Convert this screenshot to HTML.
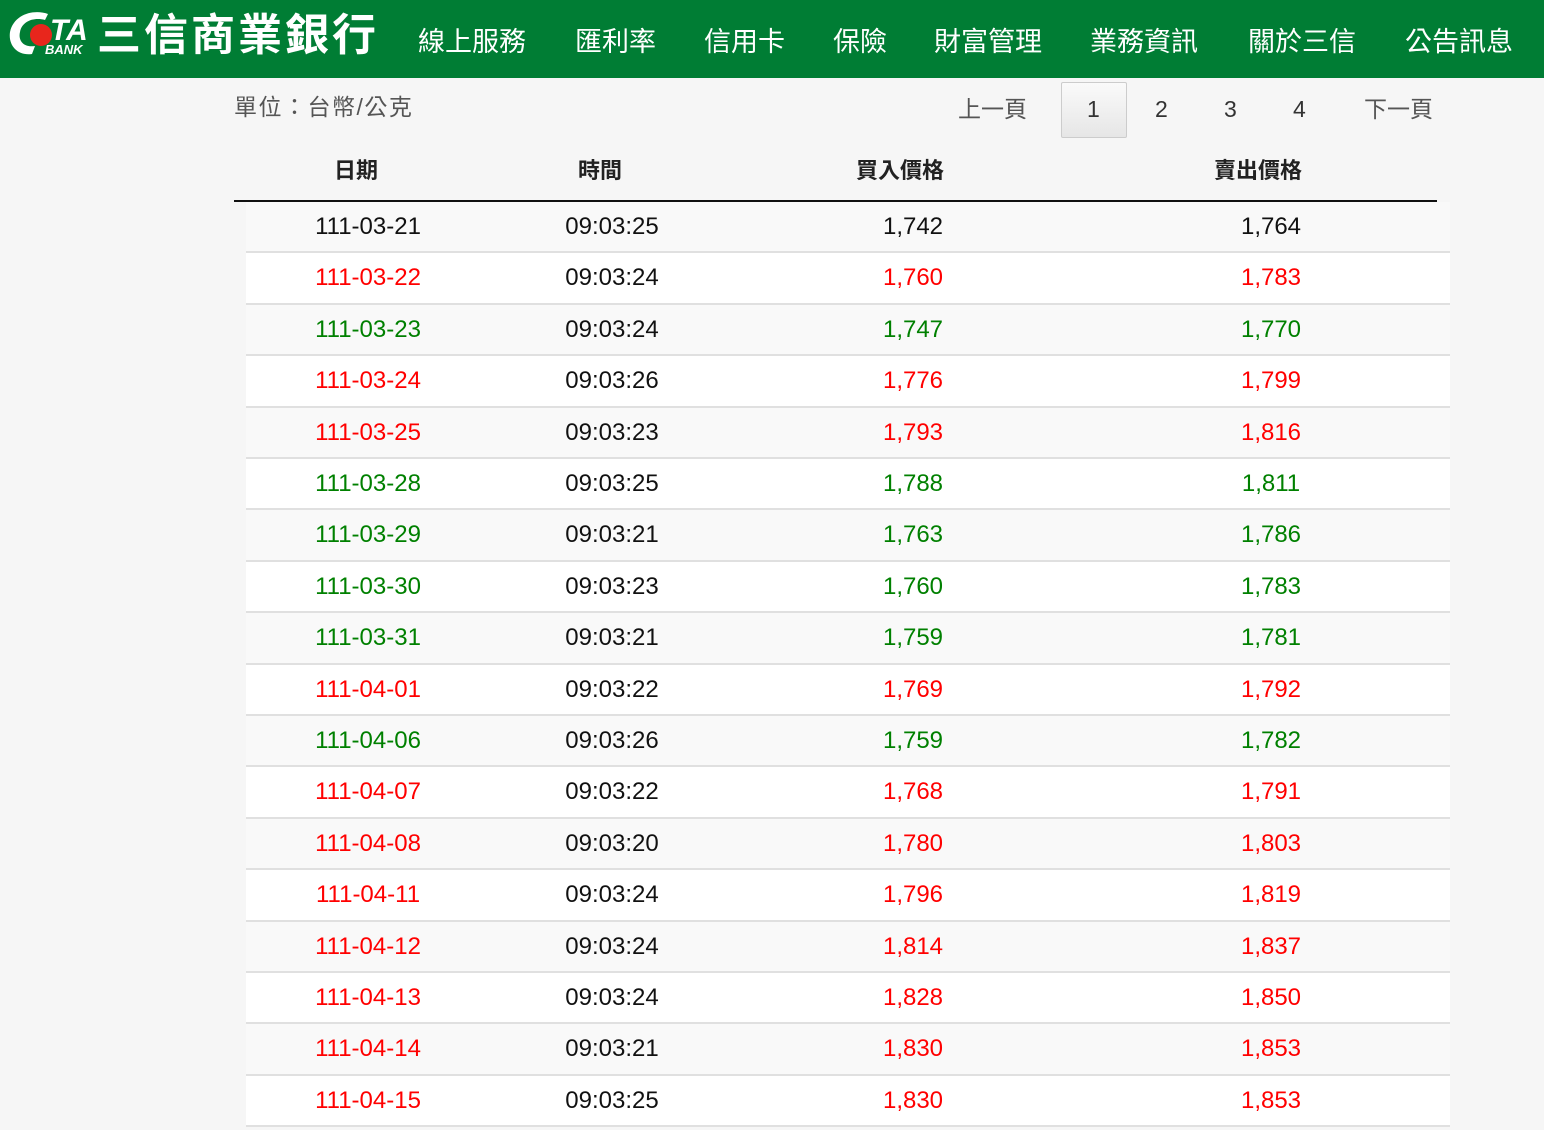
<!DOCTYPE html>
<html><head><meta charset="utf-8"><style>
*{margin:0;padding:0;box-sizing:border-box}
body{width:1544px;height:1130px;overflow:hidden;background:#f6f6f6;font-family:"Liberation Sans","Noto Sans CJK TC",sans-serif;position:relative}
.hd{position:absolute;left:0;top:0;width:1544px;height:78px;background:#007d34}
.nav{position:absolute;top:22px;color:#fff;font-size:27px;line-height:40px;white-space:nowrap}
.brand{position:absolute;left:97px;top:10px;color:#fff;font-size:44px;font-weight:bold;line-height:52px;letter-spacing:3px}
.unit{position:absolute;left:234px;top:92px;font-size:23px;color:#555;line-height:30px;letter-spacing:1.5px}
.pg{position:absolute;top:94px;font-size:23px;color:#555;line-height:30px}
.pbox{position:absolute;left:1061px;top:82px;width:66px;height:56px;border:1px solid #ccc;background:linear-gradient(#fafafa,#e6e6e6);border-radius:2px}
.th{position:absolute;top:156px;font-size:22px;font-weight:bold;color:#222;transform:translateX(-50%);line-height:30px}
.hl{position:absolute;left:234px;top:200px;width:1203px;height:2px;background:#111}
.row{position:absolute;left:246px;width:1204px;height:51.4px;border-bottom:2px solid #e0e0e0}
.row span{position:absolute;top:10px;font-size:24px;line-height:30px;transform:translateX(-50%)}
.r{color:#f00}.g{color:#008000}.k{color:#111}
</style></head><body>
<div class="hd">
<svg style="position:absolute;left:8px;top:10px" width="86" height="46" viewBox="0 0 86 46">
<path d="M40 4 C26 -1 6 4 2 22 C0 36 10 46 24 44 L27 36 C15 38 10 30 12 22 C14 11 26 7 37 10 Z" fill="#fff"/>
<circle cx="33" cy="25" r="11" fill="#e8261c"/>
<text x="42" y="30" font-family="Liberation Sans" font-style="italic" font-weight="bold" font-size="30" fill="#fff">TA</text>
<text x="37" y="44" font-family="Liberation Sans" font-style="italic" font-weight="bold" font-size="13" fill="#fff">BANK</text>
</svg>
<div class="brand">三信商業銀行</div>
<div class="nav" style="left:418px">線上服務</div>
<div class="nav" style="left:575px">匯利率</div>
<div class="nav" style="left:704px">信用卡</div>
<div class="nav" style="left:833px">保險</div>
<div class="nav" style="left:934px">財富管理</div>
<div class="nav" style="left:1090px">業務資訊</div>
<div class="nav" style="left:1248px">關於三信</div>
<div class="nav" style="left:1405px">公告訊息</div>
</div>
<div class="unit">單位：台幣/公克</div>
<div class="pg" style="left:958px">上一頁</div>
<div class="pbox"></div>
<div class="pg" style="left:1087px;color:#333">1</div>
<div class="pg" style="left:1155px;color:#333">2</div>
<div class="pg" style="left:1224px;color:#333">3</div>
<div class="pg" style="left:1293px;color:#333">4</div>
<div class="pg" style="left:1364px">下一頁</div>
<div class="th" style="left:356px">日期</div>
<div class="th" style="left:600px">時間</div>
<div class="th" style="left:900px">買入價格</div>
<div class="th" style="left:1258px">賣出價格</div>
<div class="hl"></div>
<div class="row" style="top:202px;background:#f9f9f9"><span class="k" style="left:122px">111-03-21</span><span class="k" style="left:366px">09:03:25</span><span class="k" style="left:667px">1,742</span><span class="k" style="left:1025px">1,764</span></div>
<div class="row" style="top:253.4px;background:#fff"><span class="r" style="left:122px">111-03-22</span><span class="k" style="left:366px">09:03:24</span><span class="r" style="left:667px">1,760</span><span class="r" style="left:1025px">1,783</span></div>
<div class="row" style="top:304.8px;background:#f9f9f9"><span class="g" style="left:122px">111-03-23</span><span class="k" style="left:366px">09:03:24</span><span class="g" style="left:667px">1,747</span><span class="g" style="left:1025px">1,770</span></div>
<div class="row" style="top:356.2px;background:#fff"><span class="r" style="left:122px">111-03-24</span><span class="k" style="left:366px">09:03:26</span><span class="r" style="left:667px">1,776</span><span class="r" style="left:1025px">1,799</span></div>
<div class="row" style="top:407.6px;background:#f9f9f9"><span class="r" style="left:122px">111-03-25</span><span class="k" style="left:366px">09:03:23</span><span class="r" style="left:667px">1,793</span><span class="r" style="left:1025px">1,816</span></div>
<div class="row" style="top:459px;background:#fff"><span class="g" style="left:122px">111-03-28</span><span class="k" style="left:366px">09:03:25</span><span class="g" style="left:667px">1,788</span><span class="g" style="left:1025px">1,811</span></div>
<div class="row" style="top:510.4px;background:#f9f9f9"><span class="g" style="left:122px">111-03-29</span><span class="k" style="left:366px">09:03:21</span><span class="g" style="left:667px">1,763</span><span class="g" style="left:1025px">1,786</span></div>
<div class="row" style="top:561.8px;background:#fff"><span class="g" style="left:122px">111-03-30</span><span class="k" style="left:366px">09:03:23</span><span class="g" style="left:667px">1,760</span><span class="g" style="left:1025px">1,783</span></div>
<div class="row" style="top:613.2px;background:#f9f9f9"><span class="g" style="left:122px">111-03-31</span><span class="k" style="left:366px">09:03:21</span><span class="g" style="left:667px">1,759</span><span class="g" style="left:1025px">1,781</span></div>
<div class="row" style="top:664.6px;background:#fff"><span class="r" style="left:122px">111-04-01</span><span class="k" style="left:366px">09:03:22</span><span class="r" style="left:667px">1,769</span><span class="r" style="left:1025px">1,792</span></div>
<div class="row" style="top:716px;background:#f9f9f9"><span class="g" style="left:122px">111-04-06</span><span class="k" style="left:366px">09:03:26</span><span class="g" style="left:667px">1,759</span><span class="g" style="left:1025px">1,782</span></div>
<div class="row" style="top:767.4px;background:#fff"><span class="r" style="left:122px">111-04-07</span><span class="k" style="left:366px">09:03:22</span><span class="r" style="left:667px">1,768</span><span class="r" style="left:1025px">1,791</span></div>
<div class="row" style="top:818.8px;background:#f9f9f9"><span class="r" style="left:122px">111-04-08</span><span class="k" style="left:366px">09:03:20</span><span class="r" style="left:667px">1,780</span><span class="r" style="left:1025px">1,803</span></div>
<div class="row" style="top:870.2px;background:#fff"><span class="r" style="left:122px">111-04-11</span><span class="k" style="left:366px">09:03:24</span><span class="r" style="left:667px">1,796</span><span class="r" style="left:1025px">1,819</span></div>
<div class="row" style="top:921.6px;background:#f9f9f9"><span class="r" style="left:122px">111-04-12</span><span class="k" style="left:366px">09:03:24</span><span class="r" style="left:667px">1,814</span><span class="r" style="left:1025px">1,837</span></div>
<div class="row" style="top:973px;background:#fff"><span class="r" style="left:122px">111-04-13</span><span class="k" style="left:366px">09:03:24</span><span class="r" style="left:667px">1,828</span><span class="r" style="left:1025px">1,850</span></div>
<div class="row" style="top:1024.4px;background:#f9f9f9"><span class="r" style="left:122px">111-04-14</span><span class="k" style="left:366px">09:03:21</span><span class="r" style="left:667px">1,830</span><span class="r" style="left:1025px">1,853</span></div>
<div class="row" style="top:1075.8px;background:#fff"><span class="r" style="left:122px">111-04-15</span><span class="k" style="left:366px">09:03:25</span><span class="r" style="left:667px">1,830</span><span class="r" style="left:1025px">1,853</span></div>
</body></html>
